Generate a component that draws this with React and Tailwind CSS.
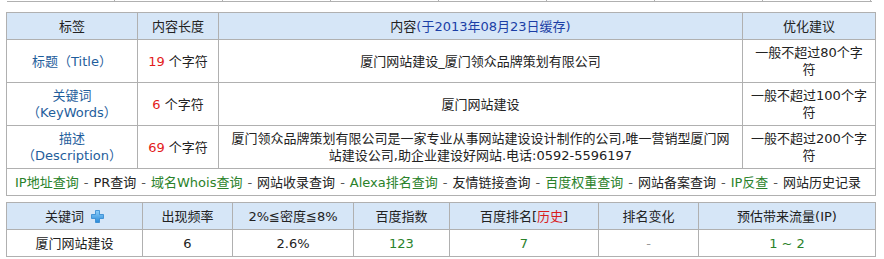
import React from 'react';

const font = { fontFamily: '"DejaVu Sans", Verdana, "Noto Sans CJK SC", sans-serif' };

const topCols = [0, 1, 2, 3, 4, 5, 6, 7];

const links = [
  { text: 'IP地址查询', green: true },
  { text: 'PR查询' },
  { text: '域名Whois查询', green: true },
  { text: '网站收录查询' },
  { text: 'Alexa排名查询', green: true },
  { text: '友情链接查询' },
  { text: '百度权重查询', green: true },
  { text: '网站备案查询' },
  { text: 'IP反查', green: true },
  { text: '网站历史记录' },
];

const PlusIcon = () => (
  <svg width="13" height="13" viewBox="0 0 13 13" className="inline-block align-[-2px]">
    <defs>
      <linearGradient id="pg" x1="0" y1="0" x2="0" y2="1">
        <stop offset="0" stopColor="#8fd0fb" />
        <stop offset="1" stopColor="#2a8ad8" />
      </linearGradient>
    </defs>
    <path d="M4.5 0.5h4v4h4v4h-4v4h-4v-4h-4v-4h4z" fill="url(#pg)" stroke="#2f86cf" strokeWidth="0.8" />
  </svg>
);

export default function App() {
  const td = 'border border-[#b0b0b0] text-center p-0';
  const th = 'border border-[#b0b0b0] text-center font-normal p-0 bg-[#d6e6f7]';

  return (
    <div className="w-[884px] h-[259px] bg-white text-[13px] text-[#222] overflow-hidden" style={font}>
      {/* tail of previous table */}
      <div className="ml-[7px] w-[865px] h-[2px] flex border-b border-[#b0b0b0]">
        {topCols.map((c) => (
          <div key={c} className="w-[108px] border-r border-[#b0b0b0]" />
        ))}
      </div>

      <table className="ml-[6px] mt-[10px] w-[869px] table-fixed border-collapse leading-[17px]">
        <colgroup>
          <col className="w-[131px]" />
          <col className="w-[81px]" />
          <col className="w-[524px]" />
          <col className="w-[133px]" />
        </colgroup>
        <thead>
          <tr className="h-[27px]">
            <th className={th}>标签</th>
            <th className={th}>内容长度</th>
            <th className={th}>
              内容<span className="text-[#1b3fa6]">(于2013年08月23日缓存)</span>
            </th>
            <th className={th}>优化建议</th>
          </tr>
        </thead>
        <tbody>
          <tr className="h-[43px]">
            <td className={`${td} text-[#1f5e9c]`}>标题（Title）</td>
            <td className={td}>
              <span className="text-[#e31c1c]">19</span> 个字符
            </td>
            <td className={td}>厦门网站建设_厦门领众品牌策划有限公司</td>
            <td className={td}>
              一般不超过80个字<br />符
            </td>
          </tr>
          <tr className="h-[43px]">
            <td className={`${td} text-[#1f5e9c]`}>
              关键词<br />（KeyWords）
            </td>
            <td className={td}>
              <span className="text-[#e31c1c]">6</span> 个字符
            </td>
            <td className={td}>厦门网站建设</td>
            <td className={td}>
              一般不超过100个字<br />符
            </td>
          </tr>
          <tr className="h-[43px]">
            <td className={`${td} text-[#1f5e9c]`}>
              描述<br />（Description）
            </td>
            <td className={td}>
              <span className="text-[#e31c1c]">69</span> 个字符
            </td>
            <td className={`${td} whitespace-nowrap`}>
              厦门领众品牌策划有限公司是一家专业从事网站建设设计制作的公司,唯一营销型厦门网
              <br />
              站建设公司,助企业建设好网站.电话:0592-5596197
            </td>
            <td className={td}>
              一般不超过200个字<br />符
            </td>
          </tr>
          <tr className="h-[27px]">
            <td colSpan={4} className="border border-[#b0b0b0] text-left pl-[8px] whitespace-nowrap">
              {links.map((l, i) => (
                <span key={l.text}>
                  {i > 0 && <span className="inline-block mx-[5px] text-[#555]">-</span>}
                  <span className={l.green ? 'text-[#2a822a]' : 'text-[#222]'}>{l.text}</span>
                </span>
              ))}
            </td>
          </tr>
        </tbody>
      </table>

      <table className="ml-[6px] mt-[6px] w-[869px] table-fixed border-collapse leading-[17px]">
        <colgroup>
          <col className="w-[136px]" />
          <col className="w-[90px]" />
          <col className="w-[121px]" />
          <col className="w-[96px]" />
          <col className="w-[149px]" />
          <col className="w-[100px]" />
          <col className="w-[177px]" />
        </colgroup>
        <thead>
          <tr className="h-[27px]">
            <th className={th}>
              关键词 <span className="ml-[3px]"><PlusIcon /></span>
            </th>
            <th className={th}>出现频率</th>
            <th className={th}>2%≦密度≦8%</th>
            <th className={th}>百度指数</th>
            <th className={th}>
              百度排名[<span className="text-[#d81e1e]">历史</span>]
            </th>
            <th className={th}>排名变化</th>
            <th className={th}>预估带来流量(IP)</th>
          </tr>
        </thead>
        <tbody>
          <tr className="h-[27px]">
            <td className={td}>厦门网站建设</td>
            <td className={td}>6</td>
            <td className={td}>2.6%</td>
            <td className={`${td} text-[#2a822a]`}>123</td>
            <td className={`${td} text-[#2a822a]`}>7</td>
            <td className={`${td} text-[#999]`}>-</td>
            <td className={`${td} text-[#2a822a]`}>1 ~ 2</td>
          </tr>
        </tbody>
      </table>
    </div>
  );
}
